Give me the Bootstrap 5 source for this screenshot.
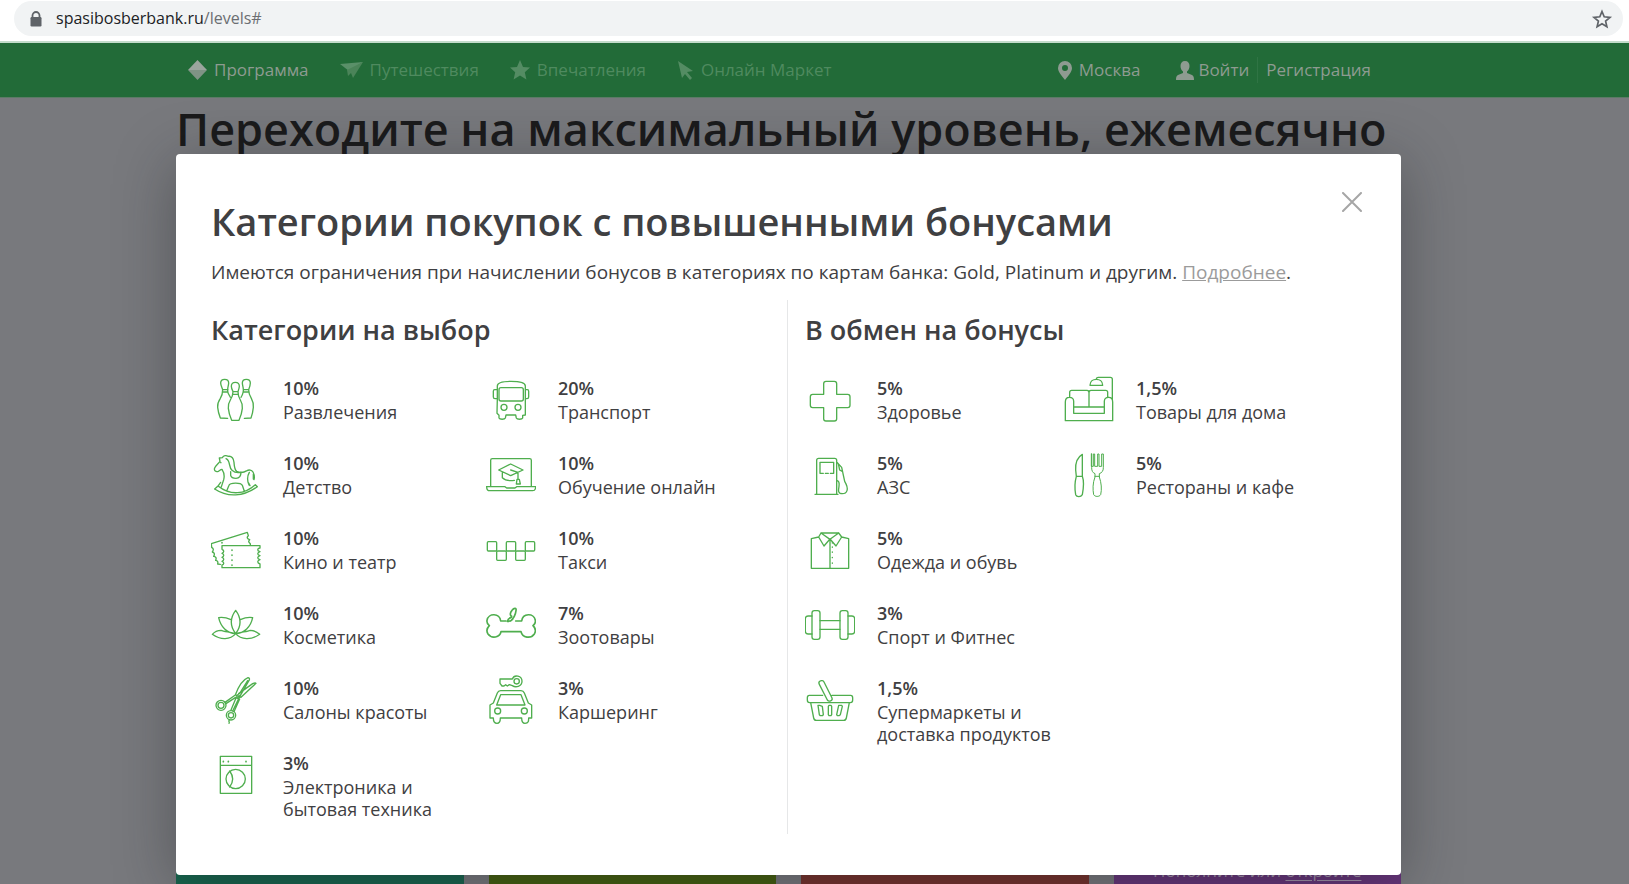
<!DOCTYPE html>
<html lang="ru">
<head>
<meta charset="utf-8">
<meta name="viewport" content="width=device-width, initial-scale=1">
<title>Спасибо от Сбербанка</title>
<link href="https://cdn.jsdelivr.net/npm/bootstrap@5.3.0/dist/css/bootstrap.min.css" rel="stylesheet">
<style>
  body { font-family: "Open Sans", "Noto Sans", sans-serif; color: #3f4042; background: #fff; }
  .address-row { padding: 1px 6px 5px 14px; border-bottom: 2px solid #c3dccb; }
  .address-pill { height: 35px; padding: 0 10px 0 14px; gap: 12px; background: #f1f3f4; color: #202124; font-size: 16px; line-height: 35px; }
  .address-path { color: #6b6e72; }
  .stage { min-height: calc(100vh - 43px); background: #78797d; overflow: hidden; }
  .frame { padding-left: 176px; padding-right: 228px; }
  .topbar { height: 55px; background: #226b38; border-bottom: 1px solid #5c7a66; font-size: 17px; font-weight: 500; }
  .topbar a { color: #4f8a5f; text-decoration: none; gap: 7px; white-space: nowrap; }
  .topbar a.lit { color: #8e9b91; }
  .topbar .main-links { gap: 31px; padding-left: 12px; }
  .topbar .user-links { padding-right: 30px; }
  .topbar .city { margin-right: 36px; }
  .topbar .sign-up { border-left: 1px solid #2f7444; }
  .page-title { margin: 0; padding-top: 1px; font-size: 45px; line-height: 60px; font-weight: 600; color: #1a1a1b; white-space: nowrap; }
  .level-cards { margin-top: 701px; gap: 25px; }
  .level-card { height: 60px; }
  .lv-teal { background: #15654d; }
  .lv-olive { background: #435f0b; }
  .lv-red { background: #77302a; }
  .lv-violet { background: #66337a; color: #a394ab; font-size: 17px; line-height: 22px; }
  .lv-violet a { color: inherit; text-underline-offset: 3px; }
  .overlay { inset: 0; padding-top: 111px; }
  .dialog-card { padding: 43px 38px 41px 35px; background: #fff; border-radius: 4px; box-shadow: 0 10px 60px rgba(30, 32, 38, .4); }
  .close-btn { top: 32px; right: 33px; padding: 6px; border: 0; background: none; line-height: 0; }
  .dialog-card h2 { margin: 0; font-size: 38px; line-height: 48px; font-weight: 600; }
  .limits { margin: 13px 0 14px; font-size: 19px; line-height: 28px; }
  .limits a { color: #9b9b9b; }
  .dialog-card h3 { margin: 0 0 27px; padding-top: 12px; font-size: 27px; line-height: 36px; font-weight: 600; }
  .pick-side { padding: 0 26px 9px 0; }
  .swap-side { padding: 0 40px 0 17px; border-left: 1px solid #e6e7e8; }
  .perk { min-height: 75px; gap: 22px; font-size: 18px; line-height: 22px; }
  .perk svg { width: 50px; height: 50px; flex: none; fill: none; stroke: #4fae4e; stroke-width: 4; stroke-linejoin: round; stroke-linecap: round; }
  .perk strong { display: block; padding: 2px 0 2px; font-weight: 600; }
</style>
</head>
<body>
<header class="address-row">
  <div class="address-pill rounded-pill d-flex align-items-center">
    <svg width="16" height="18" viewBox="0 0 16 18" aria-hidden="true"><path d="M4.500 8V5.500a3.500 3.500 0 0 1 7 0V8" fill="none" stroke="#5f6368" stroke-width="1.800"/><rect x="2.500" y="7" width="11" height="9.500" rx="1.200" fill="#5f6368"/></svg>
    <div class="flex-grow-1">spasibosberbank.ru<span class="address-path">/levels#</span></div>
    <button class="btn p-0 border-0 lh-1" aria-label="Добавить в закладки"><svg width="22" height="20" viewBox="0 0 22 20"><path d="M11 2.500l2.200 5.300 5.800.5-4.400 3.800 1.300 5.600-4.900-3-4.900 3 1.300-5.600L3 8.300l5.800-.5z" fill="none" stroke="#5f6368" stroke-width="1.700"/></svg></button>
  </div>
</header>

<main class="stage position-relative">
  <nav class="topbar frame d-flex align-items-center justify-content-between">
    <div class="main-links d-flex">
      <a href="#" class="lit d-flex align-items-center"><svg width="19" height="20" viewBox="0 0 19 20"><path d="M9.500 0L19 10H0z" fill="#9aa59d"/><path d="M0 10h19l-9.500 10z" fill="#7f9385"/></svg>Программа</a>
      <a href="#" class="d-flex align-items-center"><svg width="23" height="18" viewBox="0 0 23 18"><path d="M0 3L23 1 9 10z" fill="#5a9069"/><path d="M23 1L13 17l-2-5-3 3-1-6z" fill="#4b8459"/></svg>Путешествия</a>
      <a href="#" class="d-flex align-items-center"><svg width="20" height="20" viewBox="0 0 20 20"><path d="M10 0l3 7 7 .6-5.200 4.600 1.600 7.300L10 15.600l-6.400 3.900 1.600-7.300L0 7.600 7 7z" fill="#548c63"/></svg>Впечатления</a>
      <a href="#" class="d-flex align-items-center"><svg width="17" height="19" viewBox="0 0 17 19"><path d="M1 0l15 10-6 1 5 6-2 2-5-6-3 4z" fill="#548c63"/></svg>Онлайн Маркет</a>
    </div>
    <div class="user-links d-flex">
      <a href="#" class="lit city d-flex align-items-center"><svg width="14" height="19" viewBox="0 0 14 19"><path fill-rule="evenodd" d="M7 0a7 7 0 0 1 7 7c0 4-4 8-7 12C4 15 0 11 0 7a7 7 0 0 1 7-7zm0 4a3 3 0 1 0 0 6 3 3 0 0 0 0-6z" fill="#8e9b91"/></svg>Москва</a>
      <a href="#" class="lit d-flex align-items-center gap-1 me-2"><svg width="18" height="19" viewBox="0 0 18 19"><path d="M9 0c3 0 4.500 2 4.500 5 0 2.500-1 4.500-2.500 5.500v1.500l5 2c1.500.7 2 2 2 5H0c0-3 .5-4.300 2-5l5-2v-1.500C5.500 9.500 4.500 7.500 4.500 5 4.500 2 6 0 9 0z" fill="#8e9b91"/></svg>Войти</a>
      <a href="#" class="lit sign-up ps-2">Регистрация</a>
    </div>
  </nav>
  <div class="frame">
    <h1 class="page-title">Переходите на максимальный уровень, ежемесячно</h1>
    <div class="level-cards d-flex">
      <div class="level-card flex-fill lv-teal w-25"></div>
      <div class="level-card flex-fill lv-olive w-25"></div>
      <div class="level-card flex-fill lv-red w-25"></div>
      <div class="level-card flex-fill lv-violet w-25 text-center">Пополните или <a href="#">откройте</a></div>
    </div>
  </div>

  <div class="overlay frame position-absolute">
    <section class="dialog-card position-relative" role="dialog" aria-labelledby="dialogTitle">
      <button class="close-btn position-absolute" aria-label="Закрыть"><svg width="20" height="20" viewBox="0 0 20 20"><path d="M1 1l18 18M19 1L1 19" stroke="#a6a6a6" stroke-width="2" stroke-linecap="round"/></svg></button>
      <h2 id="dialogTitle">Категории покупок с повышенными бонусами</h2>
      <p class="limits">Имеются ограничения при начислении бонусов в категориях по картам банка: Gold, Platinum и другим. <a href="#">Подробнее</a>.</p>
      <div class="row g-0">
        <div class="col-6 pick-side">
          <h3>Категории на выбор</h3>
          <div class="row g-0">
            <div class="col-6">
              <div class="perk d-flex">
                <svg viewBox="33 30 150 150"><path d="M68 74c-3-8-6-14-6-20 0-7 5-11 12-11s12 4 12 11c0 6-3 12-3 20v6c2 8 6 12 8 17M68 74h16M67 81h17M68 74c0 12-2 18-7 26-6 9-9 18-8 27 1 10 4 22 8 32l22 1"/><path d="M146 74c3-8 5-14 5-20 0-7-5-11-12-11s-12 4-12 11c0 6 3 12 3 20v6c-2 8-3 12-7 17M130 74h16M129 81h18M146 74c0 12 3 18 8 26 5 9 7 18 6 27-1 10-3 22-7 32l-20 1M99 80c-3-6-5-12-5-16 0-8 5-12 12-12s12 4 12 12c0 4-2 10-4 16M99 80h15M98 88h17M99 80c0 12-3 17-8 25-5 8-7 16-6 25 1 12 5 24 10 36h22c5-12 9-24 10-36 1-9-1-17-6-25-5-8-7-13-7-25"/></svg>
                <div><strong>10%</strong>Развлечения</div>
              </div>
              <div class="perk d-flex">
                <svg viewBox="33 255 150 150"><path d="M60 289c-4 6-12 12-16 20-3 8 4 13 11 10 4-2 6-6 11-6 6 9 8 20 5 31-3 9-5 16-8 24M60 289l-2-10 9-1c4-7 12-8 17-4 12-2 17 7 18 18 1 13 1 21 8 27 11 6 23 3 31-2 6-4 14-2 18 4 4 8 5 16 3 23M78 281c14 5 7 25 18 35 8 7 18 8 26 6M62 293h1M92 320v11c2 8 9 9 16 9 11 0 15-8 15-19M148 322c-7 12-7 24-1 38M44 372l10-9c38 30 80 25 112-4l6 6M44 372c39 26 87 23 128-7M55 362l7-10M150 362l-4-8M80 378l7-17c3-8 35-9 40 0l6 18M160 342v-14"/></svg>
                <div><strong>10%</strong>Детство</div>
              </div>
              <div class="perk d-flex">
                <svg viewBox="33 480 150 150"><path d="M66 542h114v7c-9 1-9 9 0 11-9 3-9 10 0 12-9 3-9 10 0 12-9 3-9 10 0 13v11H66v-8c7-2 7-9 0-11 7-3 7-10 0-12 7-3 7-10 0-12 7-3 7-9 0-12zM61 598l-8-1c2-8-1-10-6-11 3-7 1-11-6-12 4-7 2-11-4-13 5-7 3-11-2-14l-1-11 108-34 3 10c-6 5-3 10 4 12-5 5-3 8 2 12v5"/><path stroke-width="5" d="M96 555v1M96 570v1M96 585v1M96 600v1M66 533v1"/></svg>
                <div><strong>10%</strong>Кино и театр</div>
              </div>
              <div class="perk d-flex">
                <svg viewBox="33 30 150 150"><path d="M107 131c-18-24-18-46 0-70 18 24 18 46 0 70zM107 131c13-5 35-6 44-10 11 0 20 5 28 12-25 18-56 17-72-2zM107 131c-13-5-35-6-44-10-11 0-20 5-26 12 25 18 54 17 70-2zM93 89c-9-4-24-8-37-6 6 28 25 47 51 48M121 89c9-4 24-8 37-6-6 28-25 47-51 48"/></svg>
                <div><strong>10%</strong>Косметика</div>
              </div>
              <div class="perk d-flex">
                <svg viewBox="33 255 150 150"><circle cx="63" cy="346" r="15"/><circle cx="63" cy="346" r="9"/><circle cx="93" cy="376" r="14"/><circle cx="93" cy="376" r="8"/><path d="M75 337l31-22 17 7 45-42c-2-3-6-1-10 1l-42 30M78 341l29-19 8 4M106 315c8-22 20-45 38-52 4 0 5 3 4 7l-29 50-21 43M102 365l17-38M93 360l15-36M119 310l24-38M88 390c-4 4 2 6-1 10"/><circle cx="114" cy="318" r="4"/></svg>
                <div><strong>10%</strong>Салоны красоты</div>
              </div>
              <div class="perk d-flex">
                <svg viewBox="33 480 150 150"><path d="M61 499h94v111H61zM61 526h94M89 543c12 16 12 32 0 48"/><circle cx="107" cy="567" r="29"/><path stroke-width="5" d="M70 514v1M85 514v1M138 514v1"/></svg>
                <div><strong>3%</strong>Электроника и бытовая техника</div>
              </div>
            </div>
            <div class="col-6">
              <div class="perk d-flex">
                <svg viewBox="33 30 150 150"><path d="M67 101V63c0-9 16-14 41-14s43 5 43 14v87l-8 1v8c-2 5-17 5-19 0l-2-9H93l-2 9c-2 5-17 5-19 0v-8l-6-6zM67 74h-8c-3 0-4 2-4 5v17c0 3 2 5 5 5h7M151 74h6c3 0 4 2 4 5v17c0 3-2 5-5 5h-5"/><rect x="72" y="68" width="73" height="40" rx="6"/><circle cx="87" cy="127" r="9"/><circle cx="129" cy="127" r="9"/></svg>
                <div><strong>20%</strong>Транспорт</div>
              </div>
              <div class="perk d-flex">
                <svg viewBox="33 255 150 150"><path d="M47 364v-78c0-4 2-5 5-5h112c3 0 5 2 5 5v78M34 365h56l5 4h25l5-4h57c0 8-3 12-9 12H44c-6 0-9-4-9-12zM71 315l36-18 37 18-37 17zM82 321v17c8 8 22 10 36 8M107 315l22 7v20M126 343h7l3 14h-12z"/></svg>
                <div><strong>10%</strong>Обучение онлайн</div>
              </div>
              <div class="perk d-flex">
                <svg viewBox="33 480 150 150"><rect x="37" y="530" width="28" height="28" rx="3"/><rect x="94" y="530" width="28" height="28" rx="3"/><rect x="151" y="530" width="28" height="28" rx="3"/><rect x="65" y="558" width="29" height="28" rx="3"/><rect x="122" y="558" width="29" height="28" rx="3"/></svg>
                <div><strong>10%</strong>Такси</div>
              </div>
              <div class="perk d-flex">
                <svg viewBox="33 30 150 150"><g stroke-width="5"><path d="M93 93H77c-2-24-37-25-41-2-1 6 2 12 7 16-8 8-9 17-4 25 11 15 36 11 39-7h60c4 19 30 22 40 7 5-8 4-17-4-25 5-4 8-10 7-16-4-23-38-22-41 2h-18"/><path d="M109 82c-8 3-11 7-12 12 9 0 13-2 16-6M110 79c-6-3-5-11 1-18 6-8 14-8 12 1-1 9-5 21-16 31"/></g></svg>
                <div><strong>7%</strong>Зоотовары</div>
              </div>
              <div class="perk d-flex">
                <svg viewBox="33 255 150 150"><path d="M112 267H75v13l6 8h6l5-4 5 4 6-4 9 3c9 6 29 4 29-13s-23-22-29-7z"/><circle cx="125" cy="274" r="8"/><path d="M45 345l10-6 12-30c2-5 5-7 10-7h61c5 0 8 2 10 7l12 30 10 6v39h-9c0 9 0 16-11 16-9 0-10-6-10-16H76c0 10-2 16-10 16-10 0-11-7-11-16H45zM77 314h61l12 31H65z"/><circle cx="68" cy="363" r="9"/><circle cx="148" cy="363" r="9"/></svg>
                <div><strong>3%</strong>Каршеринг</div>
              </div>
            </div>
          </div>
        </div>
        <div class="col-6 swap-side">
          <h3>В обмен на бонусы</h3>
          <div class="row g-0">
            <div class="col-6">
              <div class="perk d-flex">
                <svg viewBox="30 30 150 150"><path d="M93 49h25c5 0 7 3 7 7v32h33c5 0 7 3 7 7v26c0 5-3 7-7 7h-33v33c0 4-3 7-7 7H93c-5 0-7-3-7-7v-33H53c-5 0-7-3-7-7V95c0-5 3-7 7-7h33V56c0-5 3-7 7-7z"/></svg>
                <div><strong>5%</strong>Здоровье</div>
              </div>
              <div class="perk d-flex">
                <svg viewBox="30 255 150 150"><path d="M65 387V286c0-4 2-6 6-6h48c4 0 6 2 6 6v101M60 388h69M85 325H75v-33h41v33h-10M91 325h9M127 293l13 14 9 42c15 25 6 37-7 37-14 0-12-10-10-22 1-8 2-15-5-17M130 296l4 19 9 5"/></svg>
                <div><strong>5%</strong>АЗС</div>
              </div>
              <div class="perk d-flex">
                <svg viewBox="30 480 150 150"><path d="M71 516l-22 5v89h112v-89l-21-5M78 504h53l9 12-17 27-18-21-18 21-16-27zM78 504l27 19 26-19M105 523v87"/><path d="M112 533v1M112 546v1M112 561v1M112 577v1M112 594v1"/></svg>
                <div><strong>5%</strong>Одежда и обувь</div>
              </div>
              <div class="perk d-flex">
                <svg viewBox="30 30 150 150"><rect x="51" y="62" width="24" height="86" rx="7"/><rect x="135" y="62" width="24" height="86" rx="7"/><path d="M75 92h60M75 118h60M51 78H39c-5 0-8 3-8 8v38c0 5 3 8 8 8h12M159 78h12c5 0 8 3 8 8v38c0 5-3 8-8 8h-12"/></svg>
                <div><strong>3%</strong>Спорт и Фитнес</div>
              </div>
              <div class="perk d-flex">
                <svg viewBox="30 255 150 150"><path d="M83 316H43c-4 0-6 3-6 7v7c0 5 3 8 7 8h122c4 0 7-3 7-8v-7c0-4-2-7-6-7h-56M47 338l9 46c1 5 3 7 8 7h82c5 0 7-2 8-7l9-46M74 274c5-4 11-2 13 2l24 48c3 8-9 13-14 6l-24-47c-2-4-2-7 1-9z"/><path d="M69 346h5l8 3 3 25-3 3h-6l-3-3zM102 346h6l2 3v25l-2 3h-6l-2-3v-25zM131 346h9l2 3-6 25-4 3h-5l-2-3z"/></svg>
                <div><strong>1,5%</strong>Супермаркеты и доставка продуктов</div>
              </div>
            </div>
            <div class="col-6">
              <div class="perk d-flex">
                <svg viewBox="42 30 150 150"><path d="M46 167v-56c0-9 4-14 12-14s13 5 13 12v36h92v-36c0-7 5-12 13-12s12 5 12 14v56zM59 96V82c0-4 2-6 6-6h46c4 0 6 3 6 7v43M117 83c0-4 2-7 6-7h44c4 0 6 2 6 6v14M71 126h92M120 61c0-24 38-24 38 0zM139 43c0-4 2-6 6-6h36c4 0 6 2 6 6v62"/></svg>
                <div><strong>1,5%</strong>Товары для дома</div>
              </div>
              <div class="perk d-flex">
                <svg viewBox="42 255 150 150"><path d="M97 268v66c6 16 3 39 0 55-5 8-17 7-20 0-3-17-3-37 2-55l-2-19c-1-21 4-38 20-47zM79 334h18"/><path stroke-width="3" d="M125 267v41c0 10 3 15 10 18v10c-7 18-7 38-4 53 4 7 17 7 21 0 4-16 2-36-4-53v-10c8-3 12-8 12-18v-41h-5v37h-8v-37h-4v37h-9v-37h-4v37h-6v-37zM135 334h13"/></svg>
                <div><strong>5%</strong>Рестораны и кафе</div>
              </div>
            </div>
          </div>
        </div>
      </div>
    </section>
  </div>
</main>
<script src="https://cdn.jsdelivr.net/npm/bootstrap@5.3.0/dist/js/bootstrap.bundle.min.js"></script>
</body>
</html>
